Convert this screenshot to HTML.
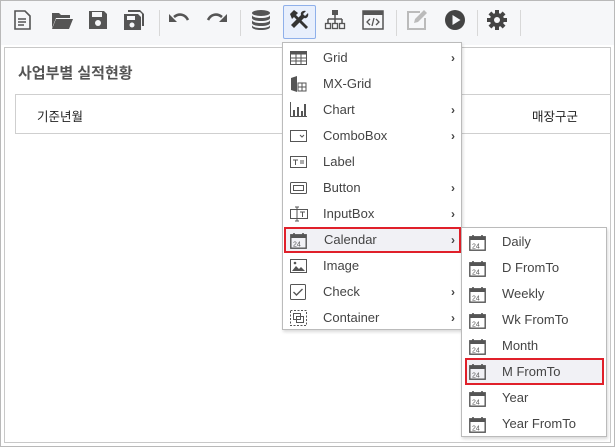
<!DOCTYPE html>
<html><head><meta charset="utf-8"><style>
*{box-sizing:border-box;margin:0;padding:0}
body{width:615px;height:447px;overflow:hidden;background:#fff;font-family:"Liberation Sans","Noto Sans CJK KR",sans-serif;position:relative}
.frame{position:absolute;left:0;top:0;width:615px;height:447px;border:1px solid #b9b9b9}
.tb{position:absolute;left:1px;top:1px;width:613px;height:44px;background:#f6f7f9}
.ic{position:absolute;top:8px;width:24px;height:24px}
.sep{position:absolute;top:10px;width:1px;height:26px;background:#d8d8d8}
.sel{position:absolute;left:283px;top:5px;width:33px;height:34px;border:1px solid #8fb0ea;background:#e8effc;border-radius:2px}
.panel{position:absolute;left:4px;top:47px;width:607px;height:396px;border:1px solid #c8c8c8;background:#fff}
.title{position:absolute;left:18px;top:62px;font-size:15px;font-weight:bold;color:#555}
.box{position:absolute;left:15px;top:94px;width:596px;height:40px;border:1px solid #cfcfcf;border-right:none}
.t{position:absolute;font-size:12.5px;color:#222}
.menu{position:absolute;background:#fff;border:1px solid #bbb;box-shadow:1px 2px 3px rgba(0,0,0,.15)}
.it{position:absolute;left:0;height:26px;font-size:13px;color:#444;line-height:26px}
.it span.l{position:absolute}
.arr{position:absolute;right:6px;top:0;font-size:12px;font-weight:bold;color:#444}
.hl{background:#f1f1f5;border:2px solid #e0202a}
svg{display:block}
</style></head><body>
<div class="tb"></div>
<div class="frame"></div>
<div class="sel"></div>
<!-- toolbar icons -->
<svg class="ic" style="left:10px" viewBox="0 0 24 24"><path d="M5 3h10l5 5v13H5z" fill="none" stroke="#555" stroke-width="1.6"/><path d="M8 11h8M8 14h8M8 17h6" stroke="#555" stroke-width="1.4"/></svg>
<svg class="ic" style="left:50px" viewBox="0 0 24 24"><path d="M2 5h7l2 2h9v3H6l-4 10z" fill="#555"/><path d="M6 11h17l-4 10H2z" fill="#555"/></svg>
<svg class="ic" style="left:86px" viewBox="0 0 24 24"><path d="M3 3h15l3 3v15H3z" fill="#555"/><rect x="6" y="4" width="10" height="5" fill="#f6f7f9"/><circle cx="12" cy="15" r="3" fill="#f6f7f9"/></svg>
<svg class="ic" style="left:122px" viewBox="0 0 24 24"><path d="M6 2h12l4 4v12h-2V6l-2-2H6z" fill="#555"/><path d="M2 6h14l3 3v13H2z" fill="#555"/><rect x="5" y="8" width="8" height="4" fill="#f6f7f9"/><circle cx="10" cy="17" r="2.5" fill="#f6f7f9"/></svg>
<div class="sep" style="left:159px"></div>
<svg class="ic" style="left:167px" viewBox="0 0 24 24"><path d="M7 9c5-4 11-3 14 3" fill="none" stroke="#555" stroke-width="2.6"/><path d="M2 6v8h8z" fill="#555"/></svg>
<svg class="ic" style="left:205px" viewBox="0 0 24 24"><path d="M17 9c-5-4-11-3-14 3" fill="none" stroke="#555" stroke-width="2.6"/><path d="M22 6v8h-8z" fill="#555"/></svg>
<div class="sep" style="left:240px"></div>
<svg class="ic" style="left:249px" viewBox="0 0 24 24"><ellipse cx="12" cy="5" rx="9" ry="3" fill="#555"/><path d="M3 7c0 4 18 4 18 0v3c0 4-18 4-18 0zM3 12c0 4 18 4 18 0v3c0 4-18 4-18 0zM3 17c0 4 18 4 18 0v2c0 4-18 4-18 0z" fill="#555"/></svg>
<svg class="ic" style="left:287px" viewBox="0 0 24 24"><path d="M3 6l4-4 4 3-2 2 12 12-2 2L7 9l-2 2z" fill="#333"/><path d="M21 5l-3 3-2-2 3-3c-3-1-6 1-5 4L4 17l3 3 10-10c3 1 5-2 4-5z" fill="#333"/></svg>
<svg class="ic" style="left:323px" viewBox="0 0 24 24"><rect x="9" y="2" width="6" height="5" fill="#555"/><path d="M12 7v4M5 11h14M5 11v4M12 11v4M19 11v4" stroke="#555" stroke-width="1.5" fill="none"/><rect x="2.5" y="15.5" width="5" height="5" fill="none" stroke="#555" stroke-width="1.3"/><rect x="9.5" y="15.5" width="5" height="5" fill="none" stroke="#555" stroke-width="1.3"/><rect x="16.5" y="15.5" width="5" height="5" fill="none" stroke="#555" stroke-width="1.3"/></svg>
<svg class="ic" style="left:361px" viewBox="0 0 24 24"><rect x="2" y="3" width="20" height="18" fill="none" stroke="#555" stroke-width="1.5"/><rect x="2" y="3" width="20" height="4" fill="#555"/><path d="M9 11l-3 3 3 3M15 11l3 3-3 3M13 10l-2 8" stroke="#555" stroke-width="1.3" fill="none"/></svg>
<div class="sep" style="left:396px"></div>
<svg class="ic" style="left:405px" viewBox="0 0 24 24"><path d="M15 4H3v17h17V10" fill="none" stroke="#bbb" stroke-width="2"/><path d="M9 15l1-4 9-9 3 3-9 9z" fill="#bbb"/></svg>
<svg class="ic" style="left:443px" viewBox="0 0 24 24"><circle cx="12" cy="12" r="10" fill="#444"/><path d="M9.5 7v10l8-5z" fill="#f6f7f9"/></svg>
<div class="sep" style="left:477px"></div>
<svg class="ic" style="left:485px" viewBox="0 0 24 24"><g fill="#444"><circle cx="12" cy="12" r="7"/><rect x="10" y="2" width="4" height="20"/><rect x="2" y="10" width="20" height="4"/><rect x="10" y="2" width="4" height="20" transform="rotate(45 12 12)"/><rect x="10" y="2" width="4" height="20" transform="rotate(-45 12 12)"/></g><circle cx="12" cy="12" r="3" fill="#f6f7f9"/></svg>
<div class="sep" style="left:520px"></div>

<div class="panel"></div>
<div class="title">사업부별 실적현황</div>
<div class="box"></div>
<div class="t" style="left:37px;top:106px">기준년월</div>
<div class="t" style="left:532px;top:106px">매장구군</div>

<div class="menu" style="left:282px;top:42px;width:180px;height:288px">
 <div class="it" style="top:2px;width:178px"><svg style="position:absolute;left:7px;top:6px" width="17" height="14" viewBox="0 0 17 14"><rect x=".5" y=".5" width="16" height="13" fill="none" stroke="#555"/><rect x=".5" y=".5" width="16" height="3" fill="#555"/><path d="M1 7h15M1 10h15M6 1v13M11 1v13" stroke="#555"/></svg><span class="l" style="left:40px">Grid</span><span class="arr">›</span></div>
 <div class="it" style="top:28px;width:178px"><svg style="position:absolute;left:7px;top:5px" width="17" height="16" viewBox="0 0 17 16"><path d="M1 2l6-2v16l-6-2z" fill="#555"/><rect x="8" y="7" width="8" height="8" fill="none" stroke="#555"/><path d="M8 11h8M12 7v8" stroke="#555"/></svg><span class="l" style="left:40px">MX-Grid</span></div>
 <div class="it" style="top:54px;width:178px"><svg style="position:absolute;left:7px;top:5px" width="17" height="15" viewBox="0 0 17 15"><path d="M.5 0v14.5H17" stroke="#555" fill="none"/><path d="M3 8h2v6H3zM7 5h2v9H7zM11 9h2v5h-2zM14 2h2v12h-2z" fill="#555"/></svg><span class="l" style="left:40px">Chart</span><span class="arr">›</span></div>
 <div class="it" style="top:80px;width:178px"><svg style="position:absolute;left:7px;top:7px" width="17" height="12" viewBox="0 0 17 12"><rect x=".5" y=".5" width="16" height="11" fill="none" stroke="#555"/><path d="M10 5l2 2 2-2" stroke="#555" fill="none"/></svg><span class="l" style="left:40px">ComboBox</span><span class="arr">›</span></div>
 <div class="it" style="top:106px;width:178px"><svg style="position:absolute;left:7px;top:7px" width="17" height="12" viewBox="0 0 17 12"><rect x=".5" y=".5" width="16" height="11" fill="none" stroke="#555"/><path d="M3 4h5M5.5 4v5M10 5h4M10 7h4" stroke="#555"/></svg><span class="l" style="left:40px">Label</span></div>
 <div class="it" style="top:132px;width:178px"><svg style="position:absolute;left:7px;top:7px" width="17" height="12" viewBox="0 0 17 12"><rect x=".5" y=".5" width="16" height="11" rx="1" fill="none" stroke="#555"/><rect x="3.5" y="3.5" width="10" height="5" fill="none" stroke="#555"/></svg><span class="l" style="left:40px">Button</span><span class="arr">›</span></div>
 <div class="it" style="top:158px;width:178px"><svg style="position:absolute;left:7px;top:5px" width="18" height="16" viewBox="0 0 18 16"><rect x=".5" y="3.5" width="17" height="9" fill="none" stroke="#555"/><path d="M5 1h4M7 1v14M5 15h4M10 6h5M12.5 6v5" stroke="#555"/></svg><span class="l" style="left:40px">InputBox</span><span class="arr">›</span></div>
 <div class="it hl" style="top:184px;left:1px;width:177px;height:26px;line-height:22px"><svg style="position:absolute;left:4px;top:3px" width="17" height="17" viewBox="0 0 17 17"><rect x=".8" y="2.8" width="15.4" height="13.4" fill="none" stroke="#555" stroke-width="1.4"/><rect x="1" y="3" width="15" height="3" fill="#555"/><path d="M4 1v3M13 1v3" stroke="#555" stroke-width="1.6"/><text x="3" y="14.5" font-size="7" font-family="Liberation Sans" fill="#555">24</text></svg><span class="l" style="left:38px">Calendar</span><span class="arr" style="right:4px">›</span></div>
 <div class="it" style="top:210px;width:178px"><svg style="position:absolute;left:7px;top:6px" width="17" height="14" viewBox="0 0 17 14"><rect x=".5" y=".5" width="16" height="13" fill="none" stroke="#555"/><path d="M2 12l4-5 3 3 2-2 4 4z" fill="#555"/><circle cx="5" cy="4" r="1.3" fill="#555"/></svg><span class="l" style="left:40px">Image</span></div>
 <div class="it" style="top:236px;width:178px"><svg style="position:absolute;left:7px;top:5px" width="16" height="16" viewBox="0 0 16 16"><rect x=".5" y=".5" width="15" height="15" rx="1" fill="none" stroke="#555"/><path d="M3.5 8l3 3 6-6" stroke="#555" stroke-width="1.4" fill="none"/></svg><span class="l" style="left:40px">Check</span><span class="arr">›</span></div>
 <div class="it" style="top:262px;width:178px"><svg style="position:absolute;left:7px;top:5px" width="17" height="16" viewBox="0 0 17 16"><rect x=".5" y=".5" width="16" height="15" fill="none" stroke="#555" stroke-dasharray="2 1.5"/><rect x="3.5" y="3.5" width="7" height="6" fill="none" stroke="#555"/><rect x="6.5" y="6.5" width="7" height="6" fill="none" stroke="#555"/></svg><span class="l" style="left:40px">Container</span><span class="arr">›</span></div>
</div>

<div class="menu" style="left:461px;top:227px;width:146px;height:210px">
 <div class="it" style="top:1px;width:144px"><svg style="position:absolute;left:7px;top:5px" width="17" height="17" viewBox="0 0 17 17"><rect x=".8" y="2.8" width="15.4" height="13.4" fill="none" stroke="#555" stroke-width="1.4"/><rect x="1" y="3" width="15" height="3" fill="#555"/><path d="M4 1v3M13 1v3" stroke="#555" stroke-width="1.6"/><text x="3" y="14.5" font-size="7" font-family="Liberation Sans" fill="#555">24</text></svg><span class="l" style="left:40px">Daily</span></div>
 <div class="it" style="top:27px;width:144px"><svg style="position:absolute;left:7px;top:5px" width="17" height="17" viewBox="0 0 17 17"><rect x=".8" y="2.8" width="15.4" height="13.4" fill="none" stroke="#555" stroke-width="1.4"/><rect x="1" y="3" width="15" height="3" fill="#555"/><path d="M4 1v3M13 1v3" stroke="#555" stroke-width="1.6"/><text x="3" y="14.5" font-size="7" font-family="Liberation Sans" fill="#555">24</text></svg><span class="l" style="left:40px">D FromTo</span></div>
 <div class="it" style="top:53px;width:144px"><svg style="position:absolute;left:7px;top:5px" width="17" height="17" viewBox="0 0 17 17"><rect x=".8" y="2.8" width="15.4" height="13.4" fill="none" stroke="#555" stroke-width="1.4"/><rect x="1" y="3" width="15" height="3" fill="#555"/><path d="M4 1v3M13 1v3" stroke="#555" stroke-width="1.6"/><text x="3" y="14.5" font-size="7" font-family="Liberation Sans" fill="#555">24</text></svg><span class="l" style="left:40px">Weekly</span></div>
 <div class="it" style="top:79px;width:144px"><svg style="position:absolute;left:7px;top:5px" width="17" height="17" viewBox="0 0 17 17"><rect x=".8" y="2.8" width="15.4" height="13.4" fill="none" stroke="#555" stroke-width="1.4"/><rect x="1" y="3" width="15" height="3" fill="#555"/><path d="M4 1v3M13 1v3" stroke="#555" stroke-width="1.6"/><text x="3" y="14.5" font-size="7" font-family="Liberation Sans" fill="#555">24</text></svg><span class="l" style="left:40px">Wk FromTo</span></div>
 <div class="it" style="top:105px;width:144px"><svg style="position:absolute;left:7px;top:5px" width="17" height="17" viewBox="0 0 17 17"><rect x=".8" y="2.8" width="15.4" height="13.4" fill="none" stroke="#555" stroke-width="1.4"/><rect x="1" y="3" width="15" height="3" fill="#555"/><path d="M4 1v3M13 1v3" stroke="#555" stroke-width="1.6"/><text x="3" y="14.5" font-size="7" font-family="Liberation Sans" fill="#555">24</text></svg><span class="l" style="left:40px">Month</span></div>
 <div class="it hl" style="top:130px;left:3px;width:139px;height:27px;line-height:23px"><svg style="position:absolute;left:2px;top:3px" width="17" height="17" viewBox="0 0 17 17"><rect x=".8" y="2.8" width="15.4" height="13.4" fill="none" stroke="#555" stroke-width="1.4"/><rect x="1" y="3" width="15" height="3" fill="#555"/><path d="M4 1v3M13 1v3" stroke="#555" stroke-width="1.6"/><text x="3" y="14.5" font-size="7" font-family="Liberation Sans" fill="#555">24</text></svg><span class="l" style="left:35px">M FromTo</span></div>
 <div class="it" style="top:157px;width:144px"><svg style="position:absolute;left:7px;top:5px" width="17" height="17" viewBox="0 0 17 17"><rect x=".8" y="2.8" width="15.4" height="13.4" fill="none" stroke="#555" stroke-width="1.4"/><rect x="1" y="3" width="15" height="3" fill="#555"/><path d="M4 1v3M13 1v3" stroke="#555" stroke-width="1.6"/><text x="3" y="14.5" font-size="7" font-family="Liberation Sans" fill="#555">24</text></svg><span class="l" style="left:40px">Year</span></div>
 <div class="it" style="top:183px;width:144px"><svg style="position:absolute;left:7px;top:5px" width="17" height="17" viewBox="0 0 17 17"><rect x=".8" y="2.8" width="15.4" height="13.4" fill="none" stroke="#555" stroke-width="1.4"/><rect x="1" y="3" width="15" height="3" fill="#555"/><path d="M4 1v3M13 1v3" stroke="#555" stroke-width="1.6"/><text x="3" y="14.5" font-size="7" font-family="Liberation Sans" fill="#555">24</text></svg><span class="l" style="left:40px">Year FromTo</span></div>
</div>
</body></html>
